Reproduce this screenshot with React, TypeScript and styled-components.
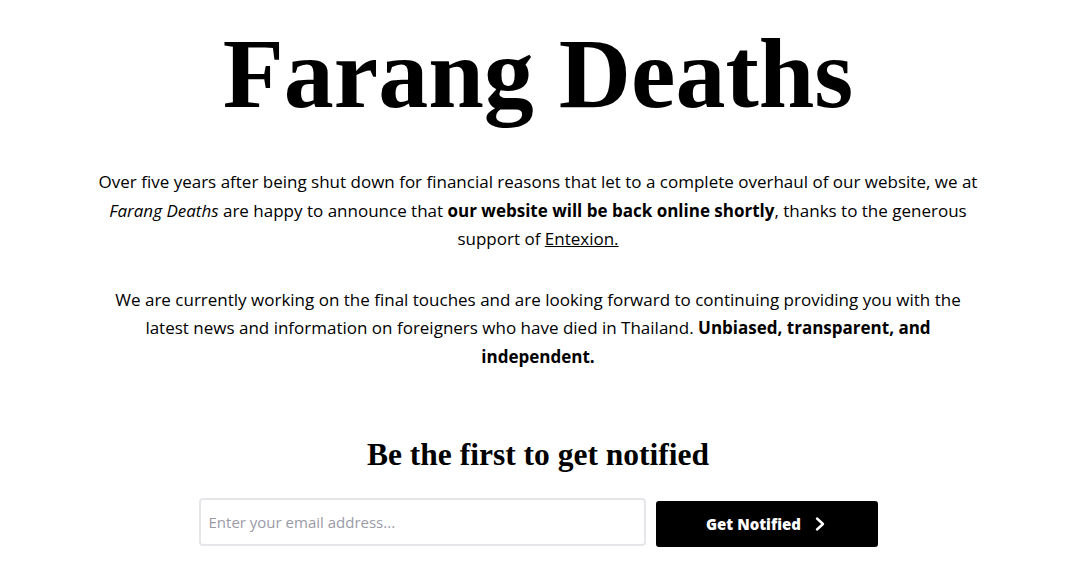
import React from "react";
import styled, { createGlobalStyle } from "styled-components";

const Global = createGlobalStyle`
  html, body { margin: 0; padding: 0; background: #fff; }
  body { font-family: "Open Sans", "Noto Sans", sans-serif; color: #000; }
`;

const Page = styled.main`
  display: flex;
  flex-direction: column;
  align-items: center;
  padding: 14px 0 0 4px;
`;

const Title = styled.h1`
  margin: 0;
  font-family: "Liberation Serif", serif;
  font-weight: 700;
  font-size: 100px;
  line-height: 120px;
  letter-spacing: 0;
`;

const Intro = styled.section`
  width: 884px;
  margin-top: 34px;
  display: flex;
  flex-direction: column;
  gap: 32px;
`;

const Para = styled.p`
  margin: 0;
  text-align: center;
  font-size: 17px;
  line-height: 28.5px;
  a { color: inherit; text-decoration: underline; }
`;

const Sub = styled.h2`
  margin: 64px 0 0;
  font-family: "Liberation Serif", serif;
  font-weight: 700;
  font-size: 31.5px;
  line-height: 40px;
`;

const Form = styled.form`
  display: flex;
  align-items: center;
  gap: 10px;
  margin-top: 22px;
`;

const Input = styled.input`
  box-sizing: border-box;
  width: 447px;
  height: 48px;
  border: 2px solid #e6e6ea;
  border-radius: 4px;
  padding: 0 8px;
  font-family: "Open Sans", sans-serif;
  font-size: 15px;
  outline: none;
  &::placeholder { color: #9a9aa6; }
`;

const Button = styled.button`
  box-sizing: border-box;
  width: 222px;
  height: 46px;
  margin-top: 4px;
  background: #000;
  color: #fff;
  border: none;
  border-radius: 3px;
  display: flex;
  align-items: center;
  justify-content: center;
  gap: 12px;
  font-family: "Open Sans", sans-serif;
  font-weight: 800;
  font-size: 15px;
  cursor: pointer;
`;

export default function App() {
  return (
    <>
      <Global />
      <Page>
        <Title>Farang Deaths</Title>
        <Intro>
          <Para>
            Over five years after being shut down for financial reasons that let to a complete overhaul of our website, we at{" "}
            <em>Farang Deaths</em> are happy to announce that <strong>our website will be back online shortly</strong>, thanks to the generous
            support of <a href="#">Entexion.</a>
          </Para>
          <Para>
            We are currently working on the final touches and are looking forward to continuing providing you with the latest news and
            information on foreigners who have died in Thailand. <strong>Unbiased, transparent, and independent.</strong>
          </Para>
        </Intro>
        <Sub>Be the first to get notified</Sub>
        <Form onSubmit={(e) => e.preventDefault()}>
          <Input type="email" placeholder="Enter your email address..." />
          <Button type="submit">
            Get Notified
            <svg width="14" height="16" viewBox="0 0 14 16" fill="none" stroke="#fff" strokeWidth="2.4" strokeLinecap="round" strokeLinejoin="round">
              <path d="M4 2.5 L10 8 L4 13.5" />
            </svg>
          </Button>
        </Form>
      </Page>
    </>
  );
}
